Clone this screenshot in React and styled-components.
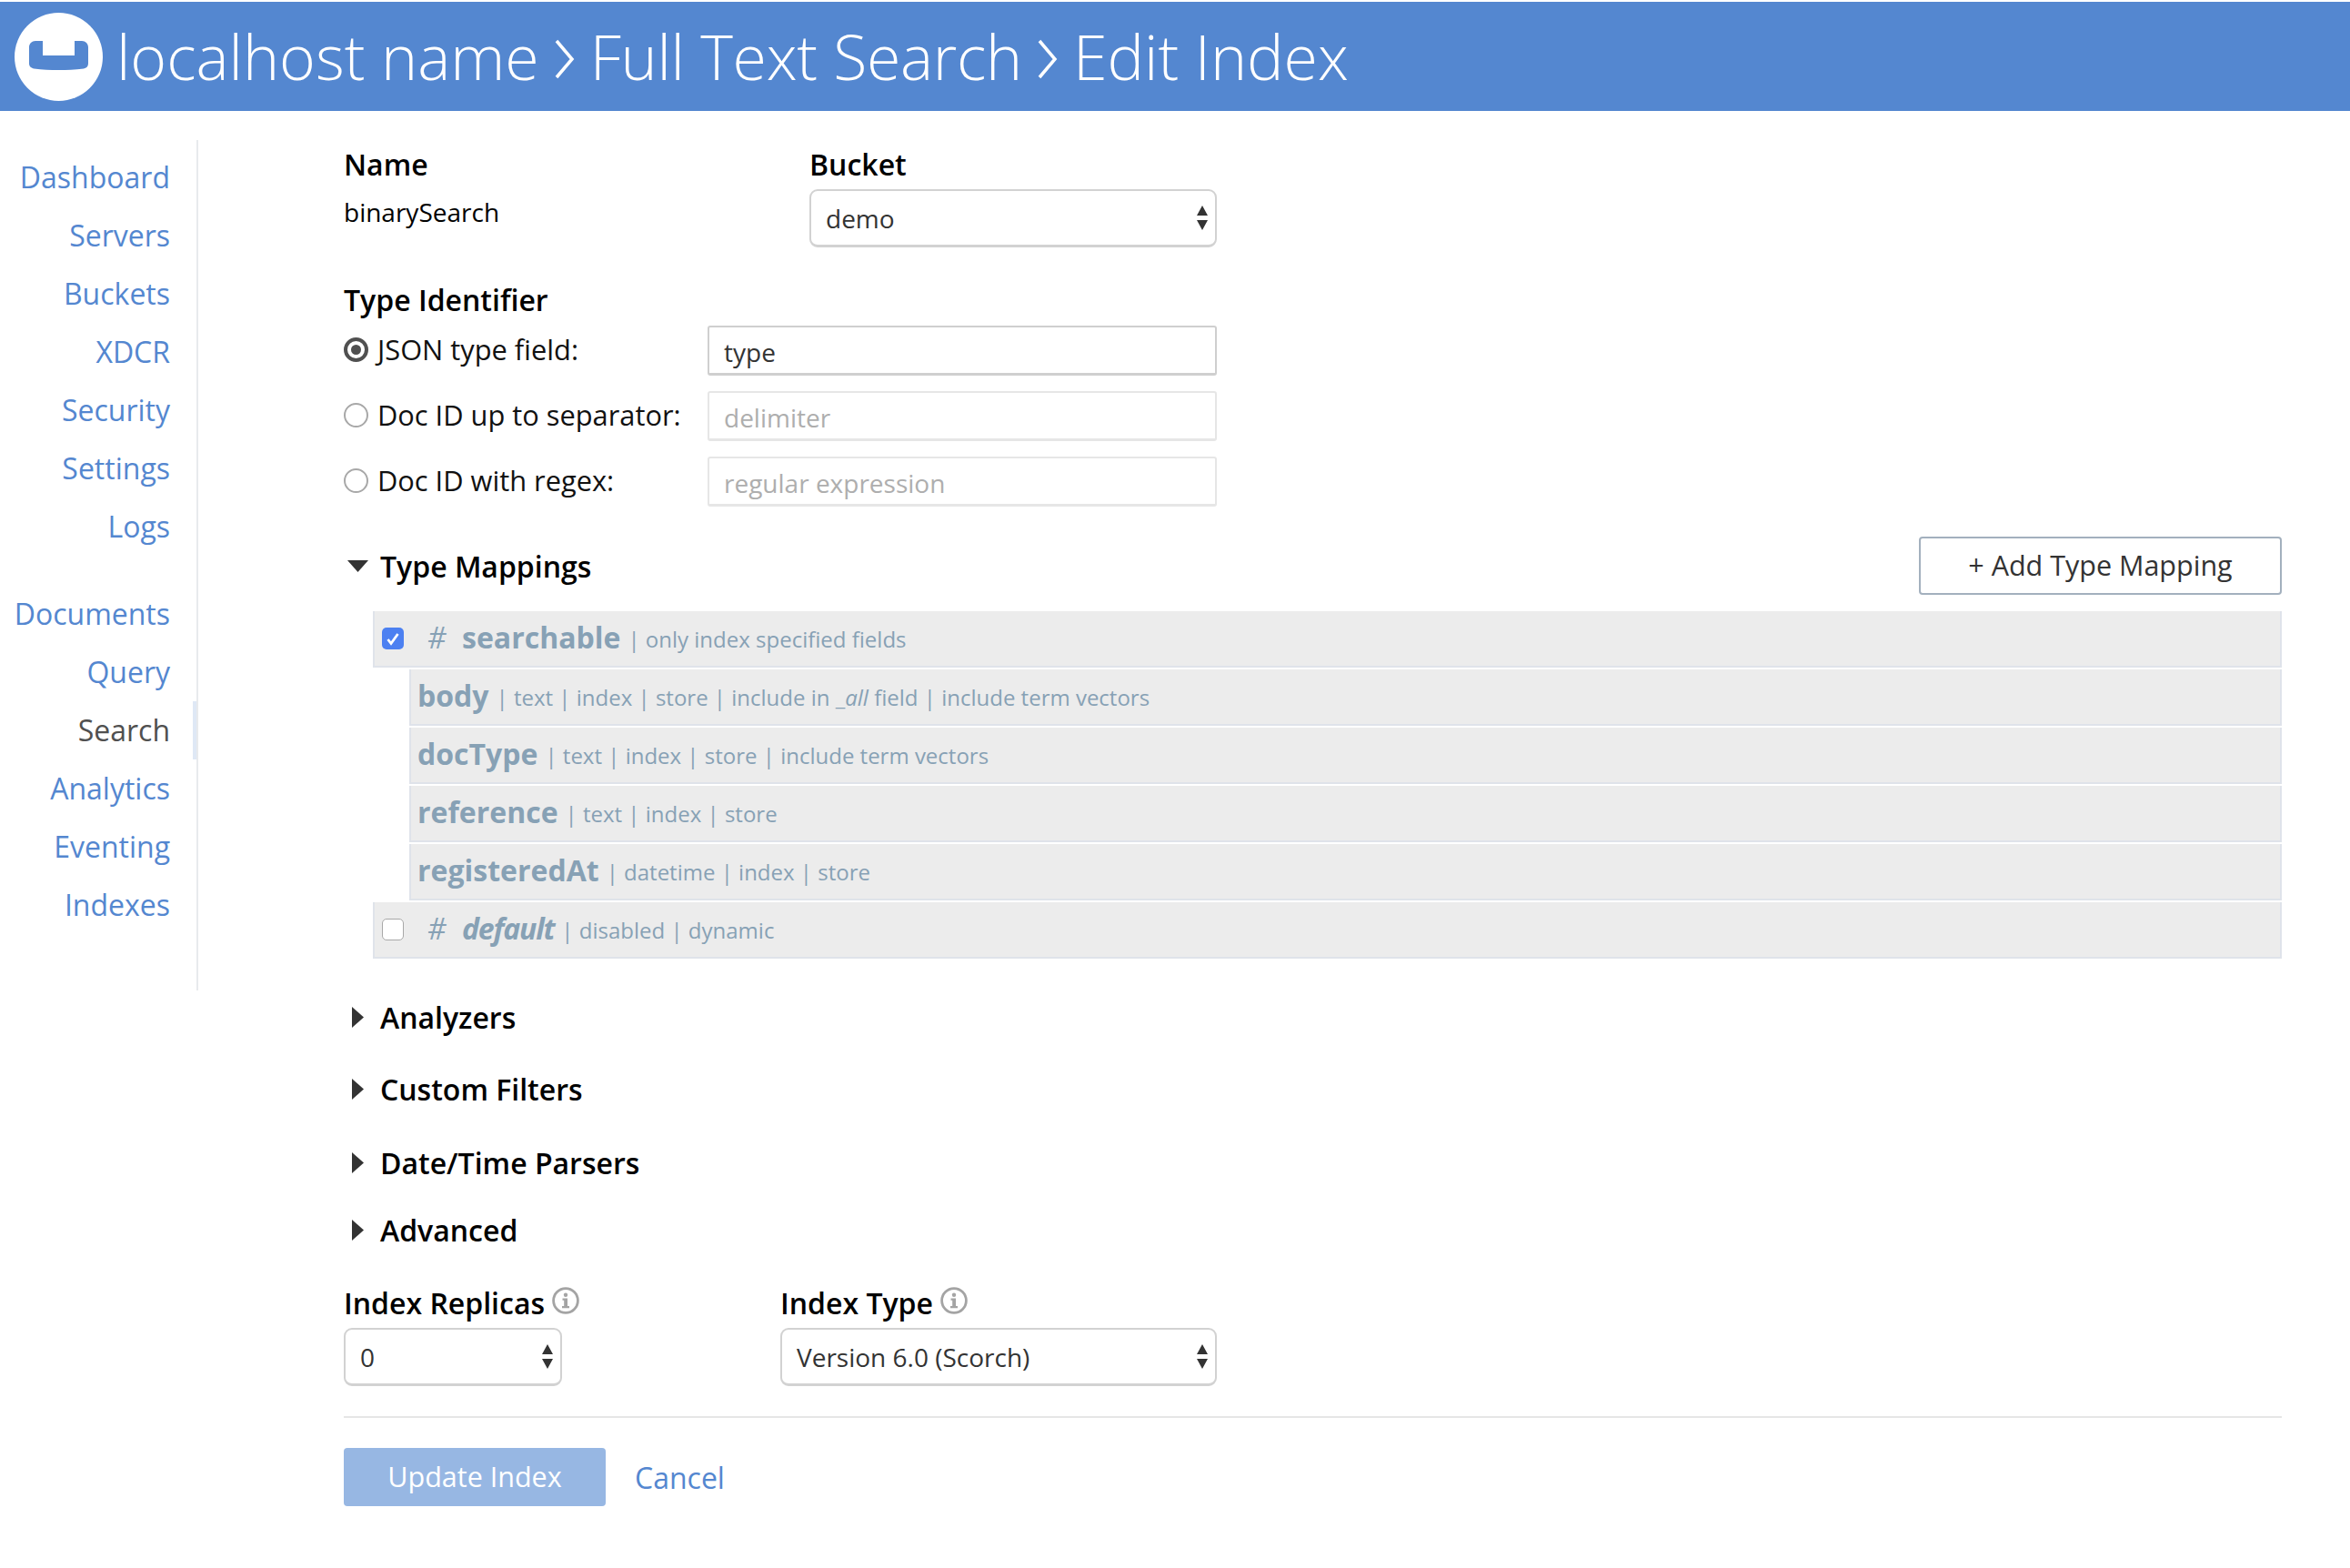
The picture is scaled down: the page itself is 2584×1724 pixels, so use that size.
import React from 'react'
import styled, { createGlobalStyle } from 'styled-components'

const GlobalStyle = createGlobalStyle`
    html, body {
        margin: 0;
        padding: 0;
        background: #fff;
    }
    body {
        font-family: "Open Sans", "Noto Sans", sans-serif;
        font-size: 32px;
        color: #333;
    }
    * {
        box-sizing: border-box;
    }
`

const Page = styled.div`
    width: 2584px;
    height: 1724px;
    padding-top: 2px;
    overflow: hidden;
`

const Header = styled.header`
    height: 120px;
    background: #5487d0;
    display: flex;
    align-items: center;
    padding-left: 16px;
    color: #fff;
`

const Logo = styled.svg`
    width: 97px;
    height: 97px;
    margin-right: 15px;
    flex-shrink: 0;
`

const Crumb = styled.span`
    font-size: 68px;
    font-weight: 300;
    line-height: 1;
    letter-spacing: ${props => props.tight ? "-0.25px" : "0"};
`

const Chevron = styled.svg`
    width: 24px;
    height: 44px;
    margin: 6px 16px 0 16px;
`

const Body = styled.div`
    display: flex;
    align-items: flex-start;
`

const Sidebar = styled.nav`
    width: 218px;
    margin-top: 32px;
    padding: 9px 0 62px;
    border-right: 2px solid #e8eaed;
    flex-shrink: 0;
`

const NavGroup = styled.div`
    margin-bottom: ${props => props.last ? "0" : "32px"};
`

const NavItem = styled.div`
    height: 64px;
    line-height: 64px;
    text-align: right;
    padding-right: 25px;
    font-size: 32px;
    color: ${props => props.active ? "#505050" : "#5487d0"};
    border-right: 4px solid ${props => props.active ? "#dfe8f5" : "transparent"};
`

const Main = styled.main`
    margin-left: 160px;
    width: 2131px;
    padding-top: 37px;
`

const TopRow = styled.div`
    display: flex;
`

const Column = styled.div`
    width: ${props => props.width};
    flex-shrink: 0;
`

const Label = styled.div`
    font-size: 32px;
    font-weight: 600;
    line-height: 44px;
    color: #000;
    margin-top: ${props => props.top || "0"};
`

const Value = styled.div`
    font-size: 28px;
    line-height: 44px;
    color: #000;
    margin-top: 8px;
`

const SelectBox = styled.div`
    width: ${props => props.width};
    height: 64px;
    margin-top: 5px;
    padding: 0 7px 0 16px;
    display: flex;
    align-items: center;
    justify-content: space-between;
    font-size: 28px;
    color: #333;
    background: #fff;
    border: 2px solid #d2d2d2;
    border-bottom-width: 3px;
    border-radius: 9px;
`

const Arrows = styled.svg`
    width: 14px;
    height: 27px;
    flex-shrink: 0;
`

const RadioRow = styled.div`
    display: flex;
    align-items: center;
    height: 55px;
    margin-top: ${props => props.first ? "6px" : "17px"};
`

const RadioLabel = styled.div`
    width: 400px;
    display: flex;
    align-items: center;
    gap: 10px;
    font-size: 30.8px;
    color: #111;
    margin-top: -3px;
`

const Radio = styled.span`
    width: 27px;
    height: 27px;
    border-radius: 50%;
    flex-shrink: 0;
    display: flex;
    align-items: center;
    justify-content: center;
    border: ${props => props.checked ? "4px solid #505050" : "2px solid #a8a8a8"};

    &::after {
        content: "";
        display: ${props => props.checked ? "block" : "none"};
        width: 11px;
        height: 11px;
        border-radius: 50%;
        background: #505050;
    }
`

const TextInput = styled.div`
    width: 560px;
    height: 55px;
    padding: 3px 16px 0;
    display: flex;
    align-items: center;
    font-size: 28px;
    color: ${props => props.empty ? "#aeaeae" : "#333"};
    border: 2px solid ${props => props.empty ? "#e6e6e6" : "#cfcfcf"};
    border-bottom-width: 3px;
    border-radius: 3px;
`

const MappingHeader = styled.div`
    display: flex;
    align-items: center;
    justify-content: space-between;
    height: 64px;
    margin-top: 33px;
`

const Disclosure = styled.div`
    display: flex;
    align-items: center;
    height: 44px;
    margin-top: ${props => props.top || "0"};
    font-size: 32px;
    font-weight: 600;
    color: #000;
`

const Caret = styled.svg`
    width: 23px;
    height: 23px;
    margin: 0 13px 0 4px;
    flex-shrink: 0;
`

const AddButton = styled.button`
    width: 399px;
    height: 64px;
    padding: 0 0 3px;
    font-family: inherit;
    font-size: 30.5px;
    color: #333;
    background: #fff;
    border: 2px solid #a3b0be;
    border-radius: 4px;
`

const Mappings = styled.div`
    margin: 18px 0 0 32px;
`

const MappingRow = styled.div`
    height: 62px;
    margin-bottom: 2px;
    margin-left: ${props => props.nested ? "40px" : "0"};
    padding: 0 0 3px ${props => props.nested ? "7px" : "8px"};
    display: flex;
    align-items: center;
    background: #ececec;
    border-left: 2px solid #dfe3ea;
    border-right: 2px solid #dfe3ea;
    border-bottom: 2px solid #dfe3ea;
    color: #87a1b5;
    white-space: pre;
`

const Check = styled.span`
    width: 24px;
    height: 24px;
    flex-shrink: 0;
    margin: 3px 26px 0 0;
    border-radius: 5px;
    display: flex;
    background: ${props => props.checked ? "#4c80f1" : "#fff"};
    border: ${props => props.checked ? "none" : "1px solid #a8a8a8"};
`

const Hash = styled.span`
    width: 38px;
    font-size: 32px;
    font-style: italic;
    font-weight: 400;
    flex-shrink: 0;
`

const FieldName = styled.span`
    font-size: 32px;
    font-weight: 700;
    font-style: ${props => props.italic ? "italic" : "normal"};
    letter-spacing: ${props => props.italic ? "-1.2px" : "0"};
`

const Meta = styled.span`
    font-size: 24px;
    margin-top: 4px;
    margin-left: 8px;
`

const LabelRow = styled.div`
    display: flex;
    align-items: flex-start;
    gap: 8px;
    margin: 37px 0 5px;
`

const InfoIcon = styled.svg`
    width: 30px;
    height: 30px;
    margin-top: 4px;
    flex-shrink: 0;
`

const Divider = styled.hr`
    height: 2px;
    margin: 33px 0 33px;
    background: #e6e6e6;
    border: none;
`

const Actions = styled.div`
    display: flex;
    align-items: center;
    gap: 32px;
`

const SaveButton = styled.button`
    width: 288px;
    height: 64px;
    padding: 0 0 2px;
    font-family: inherit;
    font-size: 30.5px;
    color: #fff;
    background: #97b7e3;
    border: none;
    border-radius: 4px;
`

const CancelLink = styled.a`
    font-size: 32px;
    color: #5487d0;
`

const LogoMark = () => (
    <Logo viewBox="0 0 97 97">
        <circle cx="48.5" cy="48.5" r="48.5" fill="#fff" />
        <path
            d="M16 38c0-4 3-7 7-7h8v16h35V31h8c4 0 7 3 7 7v18c0 3-2 5-5 5.5-10 1-18 1.5-27.5 1.5s-18-.5-27-1.5c-3-.5-5.5-2.5-5.5-5.5z"
            fill="#5487d0"
        />
    </Logo>
)

const Separator = () => (
    <Chevron viewBox="0 0 24 44">
        <path d="M3 2l17 20L3 42" fill="none" stroke="#fff" strokeWidth="3.5" />
    </Chevron>
)

const SelectArrows = () => (
    <Arrows viewBox="0 0 14 27">
        <path d="M7 0l6 11H1zM1 16h12l-6 11z" fill="#333" />
    </Arrows>
)

const Info = () => (
    <InfoIcon viewBox="0 0 30 30">
        <circle cx="15" cy="15" r="13.4" fill="none" stroke="#a4a4a4" strokeWidth="2.8" />
        <circle cx="15" cy="8.8" r="2.2" fill="#a4a4a4" />
        <path d="M11.5 12.5h5.5V21h2v2.2h-8V21h2.200v-6.300h-1.700z" fill="#a4a4a4" />
    </InfoIcon>
)

const CaretDown = () => (
    <Caret viewBox="0 0 23 23">
        <path d="M0 5h23L11.5 18z" fill="#333" />
    </Caret>
)

const CaretRight = () => (
    <Caret viewBox="0 0 23 23">
        <path d="M5 0l13 11.5L5 23z" fill="#333" />
    </Caret>
)

const navGroups = [
    ['Dashboard', 'Servers', 'Buckets', 'XDCR', 'Security', 'Settings', 'Logs'],
    ['Documents', 'Query', 'Search', 'Analytics', 'Eventing', 'Indexes'],
]

const fields = [
    { name: 'body', meta: <>| text | index | store | include in _<i>all</i> field | include term vectors</> },
    { name: 'docType', meta: '| text | index | store | include term vectors' },
    { name: 'reference', meta: '| text | index | store' },
    { name: 'registeredAt', meta: '| datetime | index | store' },
]

export default function App() {
    return (
        <Page>
            <GlobalStyle />
            <Header>
                <LogoMark />
                <Crumb>localhost name</Crumb>
                <Separator />
                <Crumb tight>Full Text Search</Crumb>
                <Separator />
                <Crumb>Edit Index</Crumb>
            </Header>
            <Body>
                <Sidebar>
                    {navGroups.map((group, i) => (
                        <NavGroup key={i} last={i === navGroups.length - 1}>
                            {group.map(item => (
                                <NavItem key={item} active={item === 'Search'}>{item}</NavItem>
                            ))}
                        </NavGroup>
                    ))}
                </Sidebar>
                <Main>
                    <TopRow>
                        <Column width="512px">
                            <Label>Name</Label>
                            <Value>binarySearch</Value>
                        </Column>
                        <Column width="448px">
                            <Label>Bucket</Label>
                            <SelectBox width="448px">demo<SelectArrows /></SelectBox>
                        </Column>
                    </TopRow>

                    <Label top="36px">Type Identifier</Label>
                    <RadioRow first>
                        <RadioLabel><Radio checked />JSON type field:</RadioLabel>
                        <TextInput>type</TextInput>
                    </RadioRow>
                    <RadioRow>
                        <RadioLabel><Radio />Doc ID up to separator:</RadioLabel>
                        <TextInput empty>delimiter</TextInput>
                    </RadioRow>
                    <RadioRow>
                        <RadioLabel><Radio />Doc ID with regex:</RadioLabel>
                        <TextInput empty>regular expression</TextInput>
                    </RadioRow>

                    <MappingHeader>
                        <Disclosure><CaretDown />Type Mappings</Disclosure>
                        <AddButton>+ Add Type Mapping</AddButton>
                    </MappingHeader>
                    <Mappings>
                        <MappingRow>
                            <Check checked>
                                <svg width="24" height="24" viewBox="0 0 24 24">
                                    <path d="M6.5 13l3.5 4.5L17.5 7" fill="none" stroke="#fff" strokeWidth="2.8" />
                                </svg>
                            </Check>
                            <Hash>#</Hash>
                            <FieldName>searchable</FieldName>
                            <Meta>| only index specified fields</Meta>
                        </MappingRow>
                        {fields.map(field => (
                            <MappingRow nested key={field.name}>
                                <FieldName>{field.name}</FieldName>
                                <Meta>{field.meta}</Meta>
                            </MappingRow>
                        ))}
                        <MappingRow>
                            <Check />
                            <Hash>#</Hash>
                            <FieldName italic>default</FieldName>
                            <Meta>| disabled | dynamic</Meta>
                        </MappingRow>
                    </Mappings>

                    <Disclosure top="42px"><CaretRight />Analyzers</Disclosure>
                    <Disclosure top="35px"><CaretRight />Custom Filters</Disclosure>
                    <Disclosure top="37px"><CaretRight />Date/Time Parsers</Disclosure>
                    <Disclosure top="30px"><CaretRight />Advanced</Disclosure>

                    <TopRow>
                        <Column width="480px">
                            <LabelRow>
                                <Label>Index Replicas</Label>
                                <Info />
                            </LabelRow>
                            <SelectBox width="240px">0<SelectArrows /></SelectBox>
                        </Column>
                        <Column width="480px">
                            <LabelRow>
                                <Label>Index Type</Label>
                                <Info />
                            </LabelRow>
                            <SelectBox width="480px">Version 6.0 (Scorch)<SelectArrows /></SelectBox>
                        </Column>
                    </TopRow>

                    <Divider />
                    <Actions>
                        <SaveButton>Update Index</SaveButton>
                        <CancelLink>Cancel</CancelLink>
                    </Actions>
                </Main>
            </Body>
        </Page>
    )
}
